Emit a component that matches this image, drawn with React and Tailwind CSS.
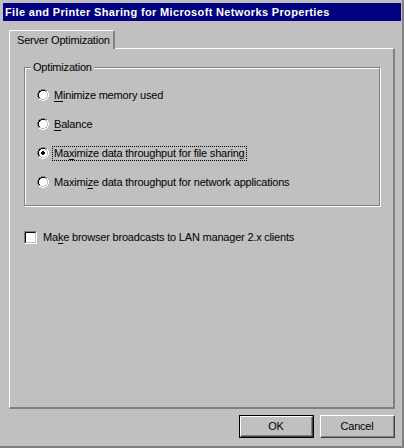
import React from "react";

const RADIO = [
  "....DDDD....",
  "..DDBBBBDD..",
  ".DBBWWWWHHL.",
  ".DBWWWWWWHL.",
  "DBWWWWWWWWHL",
  "DBWWWWWWWWHL",
  "DBWWWWWWWWHL",
  "DBWWWWWWWWHL",
  ".DBWWWWWWHL.",
  ".DHHWWWWHHL.",
  "..LLHHHHLL..",
  "....LLLL....",
];

const RADIO_COLORS = { D: "#808080", B: "#000000", W: "#ffffff", H: "#c0c0c0", L: "#ffffff" };

function Radio({ checked }) {
  return (
    <svg width="12" height="12" viewBox="0 0 12 12" shapeRendering="crispEdges" className="shrink-0">
      {RADIO.map((row, y) =>
        row.split("").map((c, x) =>
          c === "." ? null : (
            <rect key={`${x}-${y}`} x={x} y={y} width="1" height="1" fill={RADIO_COLORS[c]} />
          )
        )
      )}
      {checked && <path d="M5 4h2v1h1v2h-1v1h-2v-1h-1v-2h1z" fill="#000000" />}
    </svg>
  );
}

function Checkbox() {
  return (
    <div className="w-[13px] h-[13px] shrink-0 border-t border-l border-t-[#808080] border-l-[#808080] border-r border-b border-r-white border-b-white">
      <div className="w-full h-full bg-white border-t border-l border-t-black border-l-black border-r border-b border-r-[#c0c0c0] border-b-[#c0c0c0]" />
    </div>
  );
}

function Key({ children }) {
  return <span className="underline underline-offset-[2px]">{children}</span>;
}

function Option({ checked, focused, children }) {
  return (
    <div className="h-[16px] flex items-center gap-[3px]">
      <Radio checked={checked} />
      <span className={`px-[1px] leading-[13px] whitespace-nowrap border border-dotted ${focused ? "border-black" : "border-transparent"}`}>
        {children}
      </span>
    </div>
  );
}

function Button({ isDefault, children }) {
  return (
    <div className={`w-[75px] h-[23px] ${isDefault ? "border border-black" : ""}`}>
      <div className="w-full h-full border-t border-l border-t-white border-l-white border-r border-b border-r-[#404040] border-b-[#404040]">
        <div className="w-full h-full border-r border-b border-r-[#808080] border-b-[#808080] flex items-center justify-center">
          {children}
        </div>
      </div>
    </div>
  );
}

export default function App() {
  return (
    <div className="w-[404px] h-[448px] bg-[#c0c0c0] border-r-2 border-b-2 border-[#808080] pt-[3px] pl-[3px] pr-[1px] flex flex-col text-[11px] tracking-[-0.2px] text-black font-['Liberation_Sans',Arial,sans-serif]">
      <div className="h-[18px] shrink-0 bg-[#000080] text-white font-bold tracking-[0.35px] pl-[2px] flex items-center whitespace-nowrap">
        File and Printer Sharing for Microsoft Networks Properties
      </div>

      <div className="px-[6px] mt-[9px] flex flex-col">
        <div className="flex">
          <div className="relative z-10 w-[106px] h-[19px] bg-[#c0c0c0] border-t border-l border-white border-r-2 border-r-[#808080] rounded-t-[2px] pl-[7px] flex items-center whitespace-nowrap">
            Server Optimization
          </div>
        </div>

        <div className="-mt-[1px] h-[361px] border-t border-l border-white border-r-2 border-b-2 border-r-[#808080] border-b-[#808080] flex flex-col">
          <div className="relative mt-[18px] ml-[14px] w-[356px] h-[139px] border border-[#808080] shadow-[inset_1px_1px_0_#ffffff,1px_1px_0_#ffffff] pt-[19px] pl-[12px] flex flex-col gap-[13px]">
            <span className="absolute -top-[8px] left-[6px] px-[2px] bg-[#c0c0c0] leading-[14px]">Optimization</span>
            <Option>
              <Key>M</Key>inimize memory used
            </Option>
            <Option>
              <Key>B</Key>alance
            </Option>
            <Option checked focused>
              Ma<Key>x</Key>imize data throughput for file sharing
            </Option>
            <Option>
              Maximi<Key>z</Key>e data throughput for network applications
            </Option>
          </div>

          <div className="mt-[25px] ml-[14px] h-[13px] flex items-center gap-[4px]">
            <Checkbox />
            <span className="px-[1px] border border-transparent leading-[13px] whitespace-nowrap">
              Ma<Key>k</Key>e browser broadcasts to LAN manager 2.x clients
            </span>
          </div>
        </div>

        <div className="mt-[6px] flex justify-end gap-[6px]">
          <Button isDefault>OK</Button>
          <Button>Cancel</Button>
        </div>
      </div>
    </div>
  );
}
